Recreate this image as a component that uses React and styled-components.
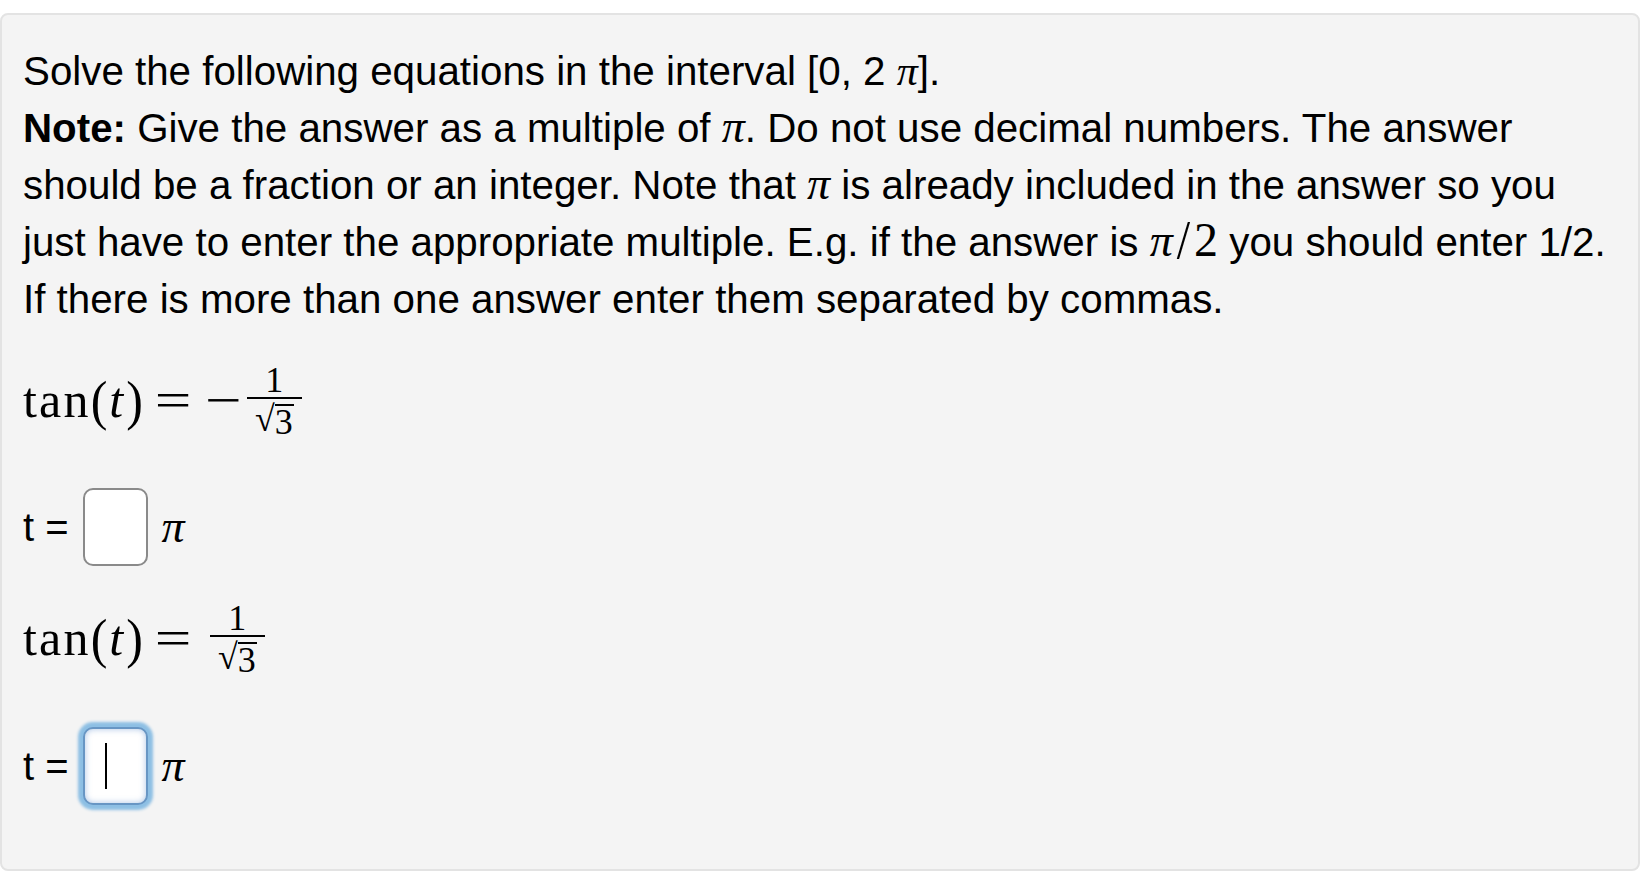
import React from "react";
import styled, { createGlobalStyle } from "styled-components";

const GlobalStyle = createGlobalStyle`
  html, body {
    margin: 0;
    padding: 0;
    background: #ffffff;
  }
  body {
    font-family: "Liberation Sans", Arial, sans-serif;
    color: #000;
  }
`;

//layout
const Panel = styled.div`
  box-sizing: border-box;
  width: 1640px;
  height: 858px;
  margin-top: 13px;
  padding: 28px 20px 0 21px;
  background: #f4f4f4;
  border: 2px solid #e3e3e3;
  border-radius: 8px;
`;

const Prompt = styled.div`
  font-size: 40.3px;
  line-height: 57px;
`;

const Line = styled.div`
  white-space: nowrap;
`;

const Strong = styled.strong`
  font-weight: bold;
`;

const InlinePi = styled.span`
  font-family: "Liberation Serif", "DejaVu Serif", serif;
  font-style: italic;
  font-size: ${(p) => p.$size || 46}px;
  line-height: 0;
`;

const InlineMath = styled.span`
  font-family: "Liberation Serif", "DejaVu Serif", serif;
  font-size: 48px;
  line-height: 0;
`;

const Slash = styled.span`
  display: inline-block;
  margin: 0 4px;
  line-height: 0;
  transform: scaleY(1.15);
`;

//math
const MathRow = styled.div`
  display: flex;
  align-items: center;
  height: 76px;
  margin-top: ${(p) => p.$top}px;
  font-family: "Liberation Serif", "DejaVu Serif", serif;
  font-size: 50px;
  line-height: 1;
`;

const Func = styled.span`
  letter-spacing: 2.2px;
`;

const Paren = styled.span`
  display: inline-block;
  transform: scaleY(1.1);
`;

const Var = styled.span`
  font-style: italic;
  margin: 0 3px 0 2px;
`;

const Op = styled.span`
  display: inline-block;
  width: 30px;
  text-align: center;
  margin-left: ${(p) => p.$left}px;
  transform: scaleX(1.3);
`;

const Frac = styled.span`
  display: inline-flex;
  flex-direction: column;
  align-items: center;
  margin-left: ${(p) => p.$left}px;
  padding: 0 8px;
  position: relative;
  top: -2px;
  font-size: 36px;
`;

const Num = styled.span`
  line-height: 37px;
  height: 37px;
  padding-top: 2px;
  box-sizing: border-box;
`;

const Bar = styled.span`
  align-self: stretch;
  height: 2px;
  margin: 0 -8px;
  background: #000;
`;

const Den = styled.span`
  display: flex;
  align-items: flex-start;
  height: 37px;
  line-height: 37px;
`;

const Radical = styled.span`
  line-height: 40px;
`;

const Radicand = styled.span`
  border-top: 2px solid #000;
  line-height: 33px;
  margin-top: 5px;
  padding-right: 1px;
`;

//answers
const AnswerRow = styled.div`
  display: flex;
  align-items: center;
  margin-top: ${(p) => p.$top}px;
`;

const Label = styled.span`
  font-size: 40px;
  line-height: 46px;
  white-space: pre;
`;

const AnswerBox = styled.div`
  box-sizing: border-box;
  display: flex;
  align-items: center;
  width: 65px;
  height: 78px;
  margin-left: 14px;
  padding-left: 20px;
  background: #fff;
  border: 2px solid ${(p) => (p.$focused ? "#6896c4" : "#8a8a8a")};
  border-radius: 10px;
  box-shadow: ${(p) =>
    p.$focused
      ? "0 0 3px 5px #8dbfe4, inset 0 0 6px rgba(90, 140, 205, 0.5)"
      : "none"};
`;

const Caret = styled.span`
  width: 2px;
  height: 46px;
  background: #000;
`;

const PiUnit = styled.span`
  margin-left: 14px;
  font-family: "Liberation Serif", "DejaVu Serif", serif;
  font-style: italic;
  font-size: 46px;
  line-height: 46px;
`;

function Equation({ negative, top }) {
  return (
    <MathRow $top={top}>
      <Func>tan</Func>
      <Paren>(</Paren>
      <Var>t</Var>
      <Paren>)</Paren>
      <Op $left={15}>=</Op>
      {negative ? <Op $left={20}>−</Op> : null}
      <Frac $left={negative ? 9 : 22}>
        <Num>1</Num>
        <Bar />
        <Den>
          <Radical>√</Radical>
          <Radicand>3</Radicand>
        </Den>
      </Frac>
    </MathRow>
  );
}

function Answer({ focused, top }) {
  return (
    <AnswerRow $top={top}>
      <Label>t =</Label>
      <AnswerBox $focused={focused}>{focused ? <Caret /> : null}</AnswerBox>
      <PiUnit>π</PiUnit>
    </AnswerRow>
  );
}

export default function App() {
  return (
    <>
      <GlobalStyle />
      <Panel>
        <Prompt>
          <Line>
            Solve the following equations in the interval [0, 2 <InlinePi $size={42}>π</InlinePi>].
          </Line>
          <Line>
            <Strong>Note:</Strong> Give the answer as a multiple of <InlinePi>π</InlinePi>. Do not use
            decimal numbers. The answer
          </Line>
          <Line>
            should be a fraction or an integer. Note that <InlinePi>π</InlinePi> is already included in
            the answer so you
          </Line>
          <Line>
            just have to enter the appropriate multiple. E.g. if the answer is{" "}
            <InlineMath>
              <InlinePi>π</InlinePi>
              <Slash>/</Slash>2
            </InlineMath>{" "}
            you should enter 1/2.
          </Line>
          <Line>If there is more than one answer enter them separated by commas.</Line>
        </Prompt>
        <Equation negative top={34} />
        <Answer top={50} />
        <Equation top={34} />
        <Answer focused top={51} />
      </Panel>
    </>
  );
}
